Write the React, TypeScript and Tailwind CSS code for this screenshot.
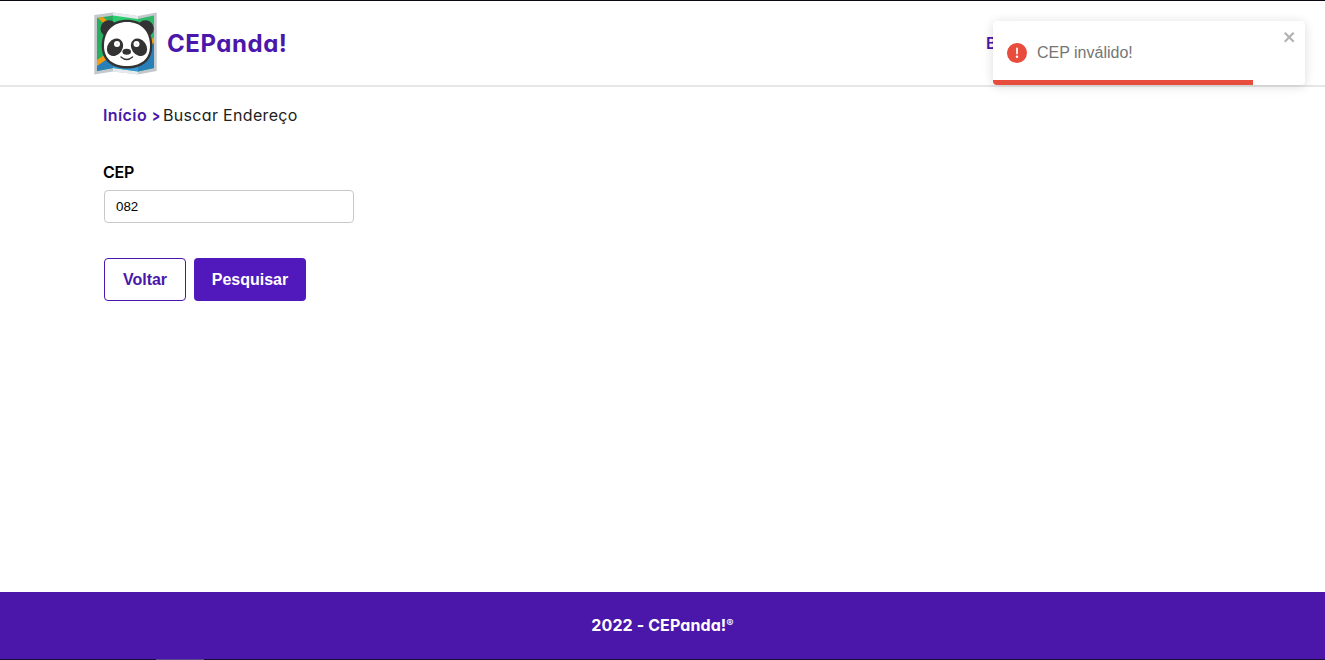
import React from 'react';

function PandaLogo() {
  return (
    <svg viewBox="0 0 63 63" className="h-[63px] w-[63px]" aria-hidden="true">
      <path d="M0.300 3 19 0.600 44 4 62.700 0.600V59L44 62.500 19 59.500 0.300 62.500Z" fill="#c3c8cd" />
      <path d="M19 0.600 44 4V62.500L19 59.500Z" fill="#e6eaed" />
      <path d="M3 6 19 3.500V56L3 59Z" fill="#27ae60" />
      <path d="M19 3.500 44 7V59.500L19 56Z" fill="#2ecc71" />
      <path d="M44 7 60 3.500V56L44 59.500Z" fill="#2fb969" />
      <path d="M3 53 19 42V56L3 59Z" fill="#2980b9" />
      <path d="M19 43 44 34V59.500L19 56Z" fill="#3498db" />
      <path d="M44 34 60 29V56L44 59.500Z" fill="#2980b9" />
      <path d="M4 6 9 5 19 14V20Z" fill="#f39c12" />
      <path d="M3 48 19 37V43L3 54Z" fill="#f39c12" />
      <path d="M44 35 60 25.500V31L44 41Z" fill="#f39c12" />
      <circle cx="14.800" cy="16.500" r="8.300" fill="#333" />
      <circle cx="51.500" cy="16.500" r="8.300" fill="#333" />
      <path d="M33 7.700C48.500 7.700 58.300 18 58.300 34C58.300 48.500 48 56.500 33 56.500S7.700 48.500 7.700 34C7.700 18 17.500 7.700 33 7.700Z" fill="#333" />
      <path d="M33 10C47 10 56 19 56 34C56 47 47 54 33 54S10 47 10 34C10 19 19 10 33 10Z" fill="#fff" />
      <ellipse cx="21" cy="35.300" rx="7.500" ry="9.300" transform="rotate(36 21 35.300)" fill="#333" />
      <ellipse cx="45" cy="35.300" rx="7.500" ry="9.300" transform="rotate(-36 45 35.300)" fill="#333" />
      <circle cx="23" cy="32" r="3" fill="#fff" />
      <circle cx="42.500" cy="32" r="3" fill="#fff" />
      <circle cx="23" cy="32" r="0.900" fill="#ddd" />
      <circle cx="42.500" cy="32" r="0.900" fill="#ddd" />
      <ellipse cx="32.700" cy="39.800" rx="4.300" ry="3" fill="#333" />
      <path d="M27 45Q32.700 50 38.500 45" fill="none" stroke="#333" strokeWidth="1.400" strokeLinecap="round" />
    </svg>
  );
}

function Toast() {
  return (
    <div role="alert" className="absolute top-[21px] left-[993px] flex h-16 w-[312px] overflow-hidden rounded bg-white font-['Liberation_Sans',sans-serif] text-[#757575] shadow-[0_1px_10px_0_rgba(0,0,0,0.1),0_2px_15px_0_rgba(0,0,0,0.05)]">
      <div className="flex grow items-center gap-2.5 pl-3.5">
        <svg viewBox="0 0 24 24" className="h-5 w-5 fill-[#e74c3c]">
          <path d="M11.983 0a12.206 12.206 0 00-8.51 3.653A11.8 11.8 0 000 12.207 11.779 11.779 0 0011.8 24h.214A12.111 12.111 0 0024 11.791 11.766 11.766 0 0011.983 0zM10.5 16.542a1.476 1.476 0 011.449-1.53h.027a1.527 1.527 0 011.523 1.47 1.475 1.475 0 01-1.449 1.53h-.027a1.529 1.529 0 01-1.523-1.47zM11 12.5v-6a1 1 0 012 0v6a1 1 0 11-2 0z" />
        </svg>
        <span className="text-base">CEP inválido!</span>
      </div>
      <button aria-label="Fechar" className="mt-2 mr-2 h-4 w-[14px] self-start opacity-30">
        <svg viewBox="0 0 14 16" className="h-4 w-[14px] fill-black">
          <path fillRule="evenodd" d="M7.71 8.23l3.75 3.75-1.48 1.48-3.75-3.75-3.75 3.75L1 11.98l3.75-3.75L1 4.48 2.48 3l3.75 3.75L9.98 3l1.48 1.48-3.75 3.75z" />
        </svg>
      </button>
      <div className="absolute bottom-0 left-0 h-[5px] w-[260px] bg-[#e74c3c]" />
    </div>
  );
}

export default function App() {
  return (
    <div className="relative flex h-[660px] flex-col overflow-hidden bg-white font-['Inter',sans-serif] text-black [font-feature-settings:'cv11'_1]">
      <header className="flex h-[87px] shrink-0 items-start justify-between border-t border-b-2 border-t-[#0b0812] border-b-[#e6e6e6] pl-[94px]">
        <div className="flex items-center gap-[10px] pt-[11px]">
          <PandaLogo />
          <span className="text-2xl font-bold tracking-[0.55px] text-[#4a17aa]">CEPanda!</span>
        </div>
        <a className="mr-[328px] w-[11px] pt-[30px] text-base font-semibold text-[#4a17aa]">B</a>
      </header>
      <main className="flex grow flex-col px-[103px] pt-4">
        <nav className="flex h-6 items-center whitespace-nowrap">
          <span className="w-[49px] font-semibold tracking-[0.4px] text-[#4a17aa]">Início</span>
          <span className="w-[11px] origin-left scale-x-75 font-bold text-[#4a17aa]">&gt;</span>
          <span className="tracking-[0.32px] text-[#212121]">Buscar Endereço</span>
        </nav>
        <label htmlFor="cep" className="mt-[33px] h-6 text-base leading-6 font-semibold tracking-[-0.3px]">CEP</label>
        <input id="cep" defaultValue="082" className="mt-[6px] ml-px h-[33px] w-[250px] rounded border border-[#c8c8c8] px-[11px] font-['Liberation_Sans',sans-serif] text-[13.333px] outline-none" />
        <div className="mt-[35px] ml-px flex gap-2 font-['Liberation_Sans',sans-serif] text-base font-bold">
          <button className="h-[43px] w-[82px] rounded border border-[#4a17aa] text-[#4a17aa]">Voltar</button>
          <button className="h-[43px] w-[112px] rounded bg-[#5118bb] text-white">Pesquisar</button>
        </div>
      </main>
      <footer className="flex h-[68px] shrink-0 flex-col items-center bg-[#4a17aa] font-bold text-white">
        <span className="flex h-[66px] items-center whitespace-nowrap">
          <span className="tracking-[0.1px]">2022 - CEPanda!</span>
          <span className="mb-1 text-[11px]">®</span>
        </span>
        <div className="mt-px h-px w-full bg-[#1c0d38] pl-[156px]">
          <div className="h-px w-12 bg-[#60488a]" />
        </div>
      </footer>
      <Toast />
    </div>
  );
}
